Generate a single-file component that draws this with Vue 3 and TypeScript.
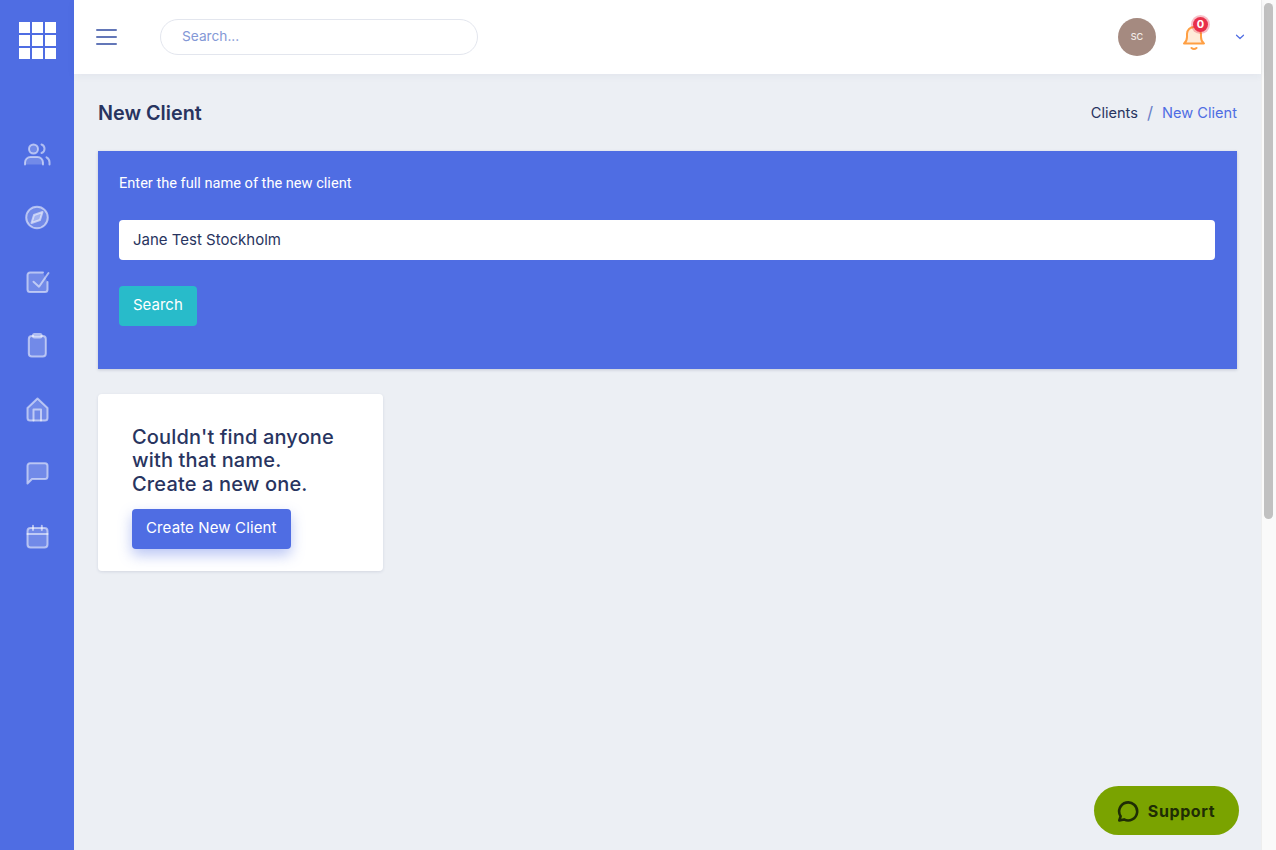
<script setup lang="ts">
const navIcons: string[] = ['users', 'compass', 'check', 'clip', 'home', 'chat', 'cal']
const cells: number[] = Array.from({ length: 9 }, (_, i) => i)
</script>

<template>
  <div class="shell">
    <aside class="sidebar">
      <div class="logo">
        <span v-for="c in cells" :key="c" class="cell"></span>
      </div>
      <nav class="nav">
        <a v-for="n in navIcons" :key="n" class="nav-item">
          <svg viewBox="0 0 28 28" width="28" height="28" fill="none" stroke="currentColor" stroke-width="2" stroke-linecap="round" stroke-linejoin="round">
            <template v-if="n === 'users'">
              <circle cx="10.500" cy="9" r="4.500" fill="rgba(255,255,255,.2)" />
              <path d="M2 24.500v-2a5.500 5.500 0 0 1 5.500-5.500h7a5.500 5.500 0 0 1 5.500 5.500v2" fill="rgba(255,255,255,.2)" />
              <path d="M18.500 4.500a4.500 4.500 0 0 1 0 8.500M23.500 17.300a5.500 5.500 0 0 1 3 5v2.200" />
            </template>
            <template v-else-if="n === 'compass'">
              <circle cx="14" cy="13.500" r="10.800" fill="rgba(255,255,255,.2)" />
              <path d="M19.500 8l-2.500 8L8.500 19l2.500-8z" fill="rgba(255,255,255,.35)" />
            </template>
            <template v-else-if="n === 'check'">
              <path d="M20 4.500H7A2.500 2.500 0 0 0 4.500 7v14.500A2.500 2.500 0 0 0 7 24h15a2.500 2.500 0 0 0 2.500-2.500V14" fill="rgba(255,255,255,.2)" />
              <path d="M10.500 13.700l5.500 5L25.500 5" />
            </template>
            <template v-else-if="n === 'clip'">
              <rect x="5.800" y="4" width="17" height="20.500" rx="3" fill="rgba(255,255,255,.2)" />
              <rect x="10" y="2" width="8.600" height="3.500" rx="1.500" />
            </template>
            <template v-else-if="n === 'home'">
              <path d="M4.500 12L14.500 2.500 24.500 12v10a2.500 2.500 0 0 1-2.500 2.500H7A2.500 2.500 0 0 1 4.500 22z" fill="rgba(255,255,255,.2)" />
              <path d="M10.500 24.500V13.500h7.500v11" />
            </template>
            <template v-else-if="n === 'chat'">
              <path d="M4.500 23.500V5.800A2.500 2.500 0 0 1 7 3.300h15a2.500 2.500 0 0 1 2.500 2.500v10.700A2.500 2.500 0 0 1 22 19H9z" fill="rgba(255,255,255,.2)" />
            </template>
            <template v-else>
              <rect x="4.500" y="4" width="20" height="19.500" rx="3" fill="rgba(255,255,255,.2)" />
              <path d="M10 1.800V6M18.800 1.800V6M4.500 10h20" />
            </template>
          </svg>
        </a>
      </nav>
    </aside>

    <div class="main">
      <header class="topbar">
        <button class="burger" aria-label="Menu">
          <span></span><span></span><span></span>
        </button>
        <input class="top-search" type="text" placeholder="Search..." />
        <div class="top-right">
          <div class="avatar">SC</div>
          <div class="bell">
            <svg viewBox="0 0 24 28" width="24" height="28" fill="none" stroke="#ff9f43" stroke-width="2" stroke-linecap="round" stroke-linejoin="round">
              <path d="M2 20.500c2-1.500 3-3 3-6.500V11a7 7 0 0 1 14 0v3c0 3.500 1 5 3 6.500z" fill="rgba(255,159,67,.2)" />
              <path d="M9.500 25c1.500 1.300 3.500 1.300 5 0" />
            </svg>
            <span class="badge">0</span>
          </div>
          <svg class="chev" viewBox="0 0 10 6" width="10" height="6" fill="none" stroke="#4f6de3" stroke-width="1.200" stroke-linecap="round" stroke-linejoin="round">
            <path d="M1.500 1.200L5 4.500l3.500-3.300" />
          </svg>
        </div>
      </header>

      <main class="content">
        <div class="page-head">
          <h1 class="title">New Client</h1>
          <div class="crumbs">
            <span class="crumb">Clients</span>
            <span class="sep">/</span>
            <span class="crumb active">New Client</span>
          </div>
        </div>

        <section class="panel">
          <label class="panel-label">Enter the full name of the new client</label>
          <input class="panel-input" type="text" value="Jane Test Stockholm" />
          <button class="btn teal">Search</button>
        </section>

        <section class="card">
          <h2 class="card-title">Couldn't find anyone<br />with that name.<br />Create a new one.</h2>
          <button class="btn primary">Create New Client</button>
        </section>
      </main>
    </div>

    <div class="scrollbar"><div class="thumb"></div></div>

    <button class="support">
      <svg viewBox="0 0 24 24" width="24" height="24" fill="none" stroke="#1f2d05" stroke-width="2.600" stroke-linejoin="round">
        <path d="M3.300 21.500l1.300-4.200A9 9 0 1 1 8 20.400z" />
      </svg>
      <span>Support</span>
    </button>
  </div>
</template>

<style>
html, body { margin: 0; padding: 0; overflow: hidden; }
</style>

<style scoped>
.shell {
  display: flex;
  height: 850px;
  overflow: hidden;
  background: #eceff4;
  font-family: Inter, "Liberation Sans", sans-serif;
  color: #283460;
  position: relative;
}
.sidebar {
  width: 74px;
  flex: none;
  background: #4f6de3;
  display: flex;
  flex-direction: column;
  align-items: center;
}
.logo {
  margin-top: 22px;
  display: grid;
  grid-template-columns: repeat(3, 11px);
  grid-auto-rows: 11px;
  gap: 2px;
}
.cell { background: #fff; }
.nav {
  margin-top: 81px;
  display: flex;
  flex-direction: column;
  gap: 36px;
  color: rgba(255, 255, 255, 0.55);
}
.nav-item { display: block; width: 28px; height: 28px; }
.nav-item svg { display: block; }
.main { flex: 1; min-width: 0; display: flex; flex-direction: column; }
.topbar {
  height: 74px;
  flex: none;
  background: #fff;
  display: flex;
  align-items: center;
  padding-left: 22px;
  padding-right: 16px;
  box-shadow: 0 2px 8px rgba(40, 52, 96, 0.05);
  position: relative;
}
.burger {
  width: 21px;
  height: 16px;
  padding: 0;
  border: 0;
  background: none;
  display: flex;
  flex-direction: column;
  justify-content: space-between;
  flex: none;
}
.burger span { display: block; height: 2px; background: #6377b8; border-radius: 1px; }
.top-search {
  margin-left: 43px;
  width: 318px;
  height: 36px;
  box-sizing: border-box;
  border: 1px solid #e3e6ee;
  border-radius: 18px;
  padding: 0 21px 2px;
  font: 13.700px Inter, sans-serif;
  outline: none;
}
.top-search::placeholder { color: #8498d6; }
.top-right { margin-left: auto; display: flex; align-items: center; }
.avatar {
  width: 38px;
  height: 38px;
  border-radius: 50%;
  background: #a58a80;
  color: #f3ece9;
  font: 500 9px/38px Inter, sans-serif;
  text-align: center;
}
.bell { position: relative; width: 24px; height: 28px; margin-left: 26px; }
.bell svg { display: block; }
.badge {
  position: absolute;
  top: -6px;
  left: 11px;
  width: 15px;
  height: 15px;
  border-radius: 50%;
  background: #e8304a;
  color: #fff;
  font: 700 11px/15px Inter, sans-serif;
  text-align: center;
  box-shadow: 0 0 0 2px rgba(232, 48, 74, 0.3);
}
.chev { margin-left: 29px; }
.content { padding: 0 24px; flex: 1; }
.page-head {
  display: flex;
  justify-content: space-between;
  align-items: center;
  margin-top: 24px;
  height: 29px;
}
.title { margin: 0; font-size: 19.800px; font-weight: 600; color: #283460; }
.crumbs { display: flex; align-items: center; font-size: 14.600px; }
.sep { margin: 0 9px; color: #6a80c8; font-size: 17px; }
.crumb.active { color: #4f6de3; }
.panel {
  margin-top: 24px;
  height: 218px;
  box-sizing: border-box;
  background: #4f6de3;
  padding: 24px 22px 24px 21px;
  display: flex;
  flex-direction: column;
  align-items: flex-start;
  box-shadow: 0 1px 3px rgba(40, 52, 96, 0.2);
}
.panel-label {
  color: #fff;
  font: 14.600px/16px Roboto, sans-serif;
}
.panel-input {
  margin-top: 29px;
  width: 100%;
  height: 40px;
  box-sizing: border-box;
  border: 0;
  border-radius: 4px;
  padding: 0 14px 2px;
  font: 15px Inter, sans-serif;
  color: #283460;
  background: #fff;
  outline: none;
}
.btn {
  height: 40px;
  border: 0;
  border-radius: 4px;
  color: #fff;
  font: 15px Inter, sans-serif;
  padding: 0 14px 3px;
}
.teal { margin-top: 26px; background: #28bbca; }
.card {
  margin-top: 25px;
  width: 285px;
  height: 177px;
  box-sizing: border-box;
  background: #fff;
  border-radius: 4px;
  padding: 32px 34px;
  box-shadow: 0 1px 3px rgba(40, 52, 96, 0.12);
}
.card-title {
  margin: 0 0 13px;
  font-size: 20px;
  line-height: 23.400px;
  font-weight: 500;
  letter-spacing: 0.15px;
  color: #283460;
}
.primary {
  background: #4f6de3;
  letter-spacing: 0.13px;
  box-shadow: 0 6px 14px rgba(79, 109, 227, 0.4);
}
.scrollbar {
  width: 15px;
  flex: none;
  background: #fafafa;
  border-left: 1px solid #eee;
  box-sizing: border-box;
  padding: 3px 3px 0 2px;
}
.thumb { height: 516px; border-radius: 5px; background: #c1c1c1; }
.support {
  position: absolute;
  left: 1094px;
  top: 786px;
  width: 145px;
  height: 49px;
  border: 0;
  border-radius: 25px;
  background: #7aa300;
  color: #1f2d05;
  display: flex;
  align-items: center;
  justify-content: center;
  gap: 8px;
  font: 700 16px Inter, sans-serif;
  letter-spacing: 0.6px;
  padding: 0 2px 0 0;
}
</style>
